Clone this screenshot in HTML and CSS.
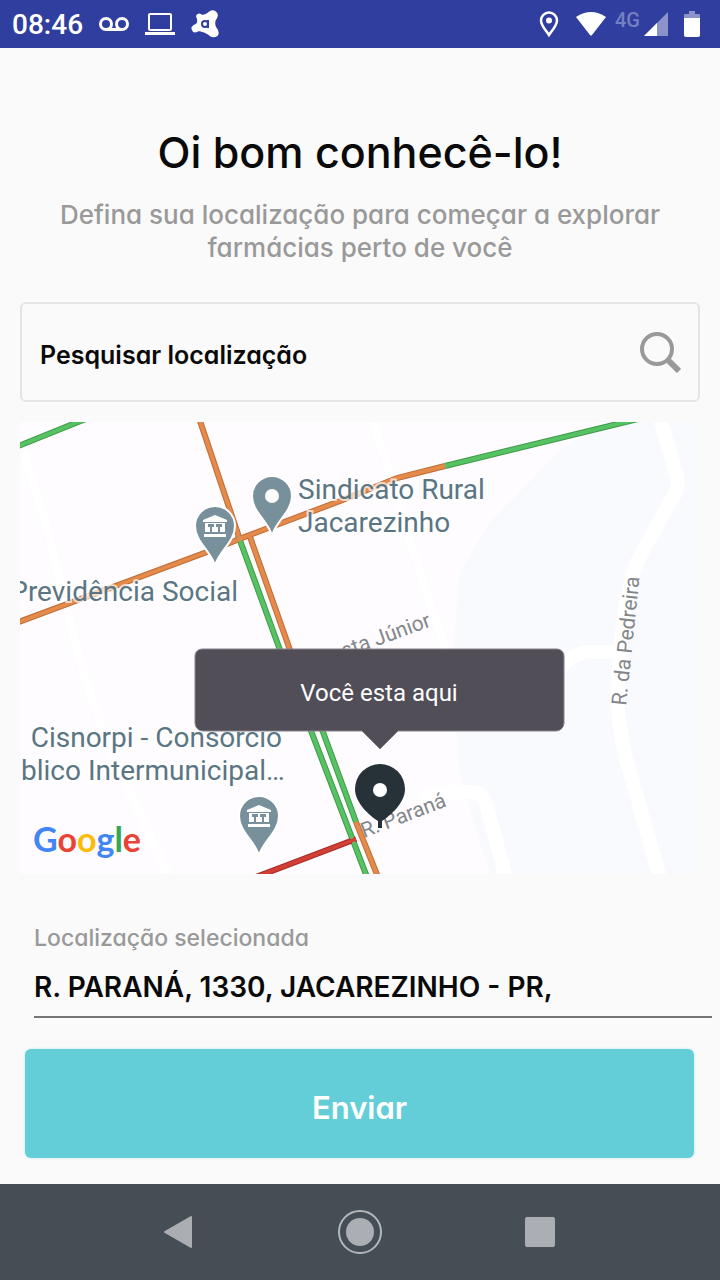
FILE: index.html
```html
<!DOCTYPE html>
<html lang="pt-BR">

<head>
  <meta charset="UTF-8">
  <meta name="viewport" content="width=device-width, initial-scale=1.0">
  <title>Localização</title>
  <link rel="stylesheet" href="styles.css">
</head>

<body>
  <header class="status-bar">
    <div class="status-left">
      <span class="clock">08:46</span>
      <svg width="30" height="16" viewBox="0 0 30 16" fill="none" stroke="#fff" stroke-width="3">
        <circle cx="7" cy="8" r="5.5" />
        <circle cx="23" cy="8" r="5.5" />
        <path d="M7 13.5h16" />
      </svg>
      <svg width="30" height="24" viewBox="0 0 30 24">
        <rect x="4" y="2" width="22" height="16" rx="1" fill="none" stroke="#fff" stroke-width="2" />
        <path d="M0 20h30v3H0z" fill="#fff" />
      </svg>
      <svg width="28" height="28" viewBox="0 0 28 28">
        <path d="M6 6Q8 3 11 6Q15 6 18 3Q21 0 24 2Q27 4 25 8Q22 12 24 17Q28 22 26 25Q22 28 18 24Q14 21 8 20Q3 23 2 20Q0 17 5 15Q9 13 6 6z" fill="#fff" stroke="#fff" stroke-width="2" stroke-linejoin="round" />
        <circle cx="14" cy="14" r="3" fill="none" stroke="#303f9f" stroke-width="2" />
        <path d="M17 10v8" stroke="#303f9f" stroke-width="2" />
      </svg>
    </div>
    <div class="status-right">
      <svg width="20" height="26" viewBox="0 0 20 26">
        <path d="M10 1.500a8 8 0 0 0-8 8c0 5 5 10 8 14.500 3-4.500 8-9.500 8-14.500a8 8 0 0 0-8-8z" fill="none" stroke="#fff" stroke-width="2.500" />
        <circle cx="10" cy="9.500" r="3" fill="#fff" />
      </svg>
      <svg class="wifi" width="32" height="26" viewBox="0 0 32 26">
        <path d="M1 6Q16-4 31 6L17 24q-1 1-2 0z" fill="#fff" />
      </svg>
      <span class="network">4G</span>
      <svg width="24" height="24" viewBox="0 0 24 24">
        <path d="M24 0v24H0z" fill="#8b93ca" />
        <path d="M13 11v13H0z" fill="#fff" />
      </svg>
      <svg class="battery" width="16" height="26" viewBox="0 0 16 26">
        <path d="M0 4q0-1 1-1h4V0h6v3h4q1 0 1 1v4H0z" fill="#8b93ca" />
        <path d="M0 7h16v17q0 2-2 2H2q-2 0-2-2z" fill="#fff" />
      </svg>
    </div>
  </header>

  <main class="content">
    <h1 class="title">Oi bom conhecê-lo!</h1>
    <p class="subtitle">Defina sua localização para começar a explorar farmácias perto de você</p>

    <div class="search">
      <input class="search-input" type="text" placeholder="Pesquisar localização" aria-label="Pesquisar localização">
      <button class="search-button" type="button" aria-label="Pesquisar">
        <svg width="42" height="42" viewBox="0 0 42 42" fill="none" stroke="#999">
          <circle cx="18" cy="18" r="15" stroke-width="4" />
          <path d="M28 28l12 12" stroke-width="6" />
        </svg>
      </button>
    </div>

    <svg class="map" viewBox="0 0 680 452" role="img" aria-label="Mapa">
      <defs>
        <path id="pin" d="M0 40C-3 26-20 16-20 0a20 20 0 0 1 40 0C20 16 3 26 0 40z" />
        <g id="building">
          <path d="M0-12L12-7v2h-24v-2zM-10-4h20v9h-20zM-11 7h22v3h-22z" fill="#fff" />
          <path d="M-7-3h6v3h-2v5h-2v-5h-2zM1-3h6v3h-2v5H3v-5H1z" fill="#78909c" />
        </g>
      </defs>
      <rect width="680" height="452" fill="#fefcff" />
      <path d="M680 0H590L545 24L470 100L440 150L432 240L440 355L470 452H680z" fill="#f8fafe" />

      <g class="street">
        <path d="M640-4L657 55Q660 68 650 80L617 140Q602 180 598 260Q596 300 607 340L640 456" />
        <path d="M400 376L430 370H455Q464 372 467 385L486 456" />
        <path d="M540 246Q552 233 566 230H600" />
        <path d="M352-4L366 40L412 190L430 235" stroke-width="8" />
        <path d="M4 30L28 110L60 240L90 330L150 456" stroke-width="8" />
      </g>

      <g class="traffic traffic-edge">
        <path d="M-4 25L68-4M425 44L618-3M218 113L260 228L347 455M286 270L303 310L336 400" stroke="#3c9a45" />
        <path d="M179-4L219 115M-4 201L187 130L227 114L320 79L377 56L425 44M229 112L270 228L286 270M336 400L358 455" stroke="#bf6c35" />
        <path d="M236 455L336 417" stroke="#a52a25" />
      </g>
      <g class="traffic">
        <path d="M-4 25L68-4M425 44L618-3M218 113L260 228L347 455M286 270L303 310L336 400" stroke="#57c263" />
        <path d="M179-4L219 115M-4 201L187 130L227 114L320 79L377 56L425 44M229 112L270 228L286 270M336 400L358 455" stroke="#e48a4b" />
        <path d="M236 455L336 417" stroke="#d23f37" />
      </g>

      <g fill="#78909c" stroke="#fff" stroke-width="2">
        <use href="#pin" x="252" y="74" />
        <use href="#pin" x="195" y="104" />
        <use href="#pin" x="239" y="394" />
      </g>
      <circle cx="252" cy="74" r="7" fill="#fff" />
      <use href="#building" x="195" y="105" />
      <use href="#building" x="239" y="395" />

      <g class="place">
        <text x="278" y="77">Sindicato Rural</text>
        <text x="278" y="110">Jacarezinho</text>
        <text x="218" y="179" text-anchor="end">Previdência Social</text>
        <text x="262" y="325" text-anchor="end">Cisnorpi - Consórcio</text>
        <text x="1" y="358">blico Intermunicipal…</text>
      </g>
      <g class="road">
        <text transform="translate(412 204) rotate(-20)" text-anchor="end">Costa Júnior</text>
        <text transform="translate(606 284) rotate(-84)">R. da Pedreira</text>
        <text transform="translate(344 416) rotate(-21)">R. Paraná</text>
      </g>

      <g>
        <path d="M182 227H537a7 7 0 0 1 7 7v67a8 8 0 0 1-8 8H378L360 327L342 309H183a8 8 0 0 1-8-8v-67a7 7 0 0 1 7-7z" fill="#514e58" stroke="#85838a" stroke-width="1" />
        <text class="callout" x="359" y="279" text-anchor="middle">Você esta aqui</text>
      </g>
      <path d="M360 342a25 25 0 0 0-25 25c0 14 15 27 23 32v7h4v-7c8-5 23-18 23-32a25 25 0 0 0-25-25z" fill="#263238" />
      <circle cx="360" cy="368" r="7" fill="#fff" />

      <text class="google" x="13" y="430"><tspan fill="#4285f4">G</tspan><tspan fill="#ea4335">o</tspan><tspan fill="#fbbc05">o</tspan><tspan fill="#4285f4">g</tspan><tspan fill="#34a853">l</tspan><tspan fill="#ea4335">e</tspan></text>
    </svg>

    <form class="location">
      <label class="location-label" for="address">Localização selecionada</label>
      <input class="location-input" id="address" type="text" value="R. PARANÁ, 1330, JACAREZINHO - PR,">
      <button class="submit" type="button">Enviar</button>
    </form>
  </main>

  <nav class="nav-bar">
    <button class="nav-button" type="button" aria-label="Voltar">
      <svg width="44" height="44" viewBox="0 0 44 44">
        <path d="M7 22L33 7V37z" fill="#abafb3" stroke="#abafb3" stroke-width="2" stroke-linejoin="round" />
      </svg>
    </button>
    <button class="nav-button" type="button" aria-label="Início">
      <svg width="44" height="44" viewBox="0 0 44 44">
        <circle cx="22" cy="22" r="21" fill="none" stroke="#b4b8bb" stroke-width="2" />
        <circle cx="22" cy="22" r="14" fill="#abafb3" />
      </svg>
    </button>
    <button class="nav-button" type="button" aria-label="Recentes">
      <svg width="44" height="44" viewBox="0 0 44 44">
        <rect x="7" y="7" width="30" height="30" rx="2" fill="#abafb3" />
      </svg>
    </button>
  </nav>
</body>

</html>
```
FILE: styles.css
```css
* {
  box-sizing: border-box;
}

body {
  margin: 0;
  min-height: 100vh;
  display: flex;
  flex-direction: column;
  background: #fafafa;
  color: #0a0a0a;
  font-family: Inter, sans-serif;
  font-feature-settings: "cv11";
}

svg {
  display: block;
}

button,
input {
  font: inherit;
  font-feature-settings: inherit;
}

/* status bar */

.status-bar {
  display: flex;
  justify-content: space-between;
  align-items: center;
  height: 48px;
  padding: 0 20px 0 12px;
  background: #303f9f;
  color: #fff;
  font-family: Roboto, sans-serif;
}

.status-left {
  display: flex;
  align-items: center;
  gap: 16px;
}

.status-right {
  display: flex;
  align-items: center;
}

.clock {
  font-size: 28px;
  font-weight: 500;
}

.wifi {
  margin: 0 8px 0 16px;
}

.network {
  margin: -8px 4px 0 0;
  color: #7480c0;
  font-size: 20px;
  font-weight: 500;
}

.battery {
  margin-left: 16px;
}

/* content */

.content {
  flex: 1;
  padding: 76px 20px 0;
}

.title {
  margin: 0;
  font-size: 43px;
  font-weight: 500;
  line-height: 56px;
  text-align: center;
}

.subtitle {
  margin: 18px 20px 38px;
  color: #999;
  font-size: 26px;
  font-weight: 500;
  line-height: 33px;
  text-align: center;
}

.search {
  display: flex;
  align-items: center;
  height: 100px;
  margin-bottom: 20px;
  padding: 0 17px 0 18px;
  border: 2px solid #e4e4e4;
  border-radius: 6px;
}

.search-input {
  flex: 1;
  min-width: 0;
  padding: 6px 0 0;
  border: 0;
  background: none;
  font-size: 25px;
  font-weight: 600;
}

.search-input::placeholder {
  color: #0a0a0a;
}

.search-button {
  padding: 0;
  border: 0;
  background: none;
}

/* map */

.map {
  width: 100%;
  height: auto;
}

.street {
  fill: none;
  stroke: #fff;
  stroke-width: 14;
}

.traffic {
  fill: none;
  stroke-width: 4;
}

.traffic-edge {
  stroke-width: 6;
}

.place {
  fill: #5b7582;
  stroke: rgba(255, 255, 255, 0.700);
  stroke-width: 4;
  paint-order: stroke;
  font-family: Roboto, sans-serif;
  font-size: 28px;
}

.road {
  fill: #84878a;
  font-family: Roboto, sans-serif;
  font-size: 21px;
}

.callout {
  fill: #fff;
  font-family: Roboto, sans-serif;
  font-size: 24px;
}

.google {
  font-family: Lato, sans-serif;
  font-size: 34px;
  font-weight: 700;
}

/* selected location */

.location {
  display: flex;
  flex-direction: column;
  margin-top: 48px;
}

.location-label {
  margin-left: 14px;
  color: #999;
  font-size: 23px;
  font-weight: 500;
  line-height: 32px;
}

.location-input {
  height: 64px;
  margin: 0 -12px 0 14px;
  padding: 4px 0 0;
  border: 0;
  border-bottom: 2px solid #757575;
  background: none;
  color: #0a0a0a;
  font-size: 28px;
  font-weight: 600;
}

.submit {
  height: 109px;
  margin: 31px 6px 26px 5px;
  padding: 8px 0 0;
  border: 0;
  border-radius: 6px;
  background: #64ced8;
  box-shadow: 0 0 3px #bce6ea;
  color: #fff;
  font-size: 31px;
  font-weight: 600;
}

/* navigation bar */

.nav-bar {
  display: flex;
  justify-content: center;
  align-items: center;
  gap: 136px;
  height: 96px;
  background: #464e55;
}

.nav-button {
  padding: 0;
  border: 0;
  background: none;
}
```
